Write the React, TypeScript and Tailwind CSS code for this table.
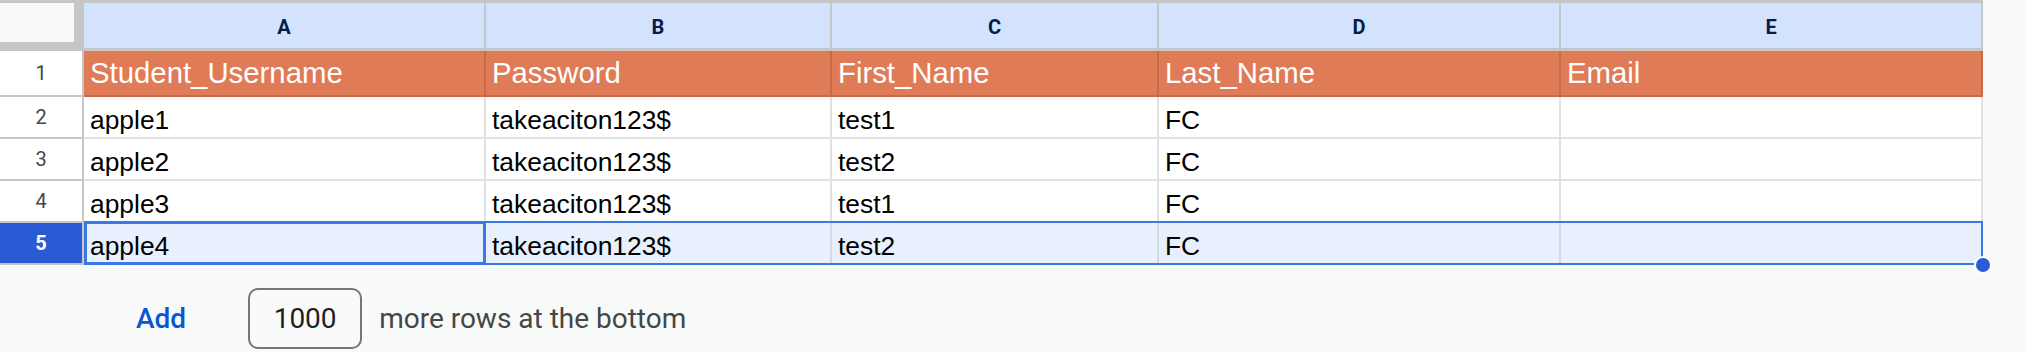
import React from "react";

type Row = {
  username: string;
  password: string;
  first: string;
  last: string;
  email: string;
};

const columns = [
  { key: "A", width: "w-[402px]" },
  { key: "B", width: "w-[346px]" },
  { key: "C", width: "w-[327px]" },
  { key: "D", width: "w-[402px]" },
  { key: "E", width: "w-[422px]" },
];

const headers = ["Student_Username", "Password", "First_Name", "Last_Name", "Email"];

const rows: Row[] = [
  { username: "apple1", password: "takeaciton123$", first: "test1", last: "FC", email: "" },
  { username: "apple2", password: "takeaciton123$", first: "test2", last: "FC", email: "" },
  { username: "apple3", password: "takeaciton123$", first: "test1", last: "FC", email: "" },
  { username: "apple4", password: "takeaciton123$", first: "test2", last: "FC", email: "" },
];

const cellFont = { fontFamily: '"Liberation Sans", Arial, sans-serif' };
const uiFont = { fontFamily: 'Roboto, "Noto Sans", sans-serif' };

function RowNumber({ n, active }: { n: number; active?: boolean }) {
  return (
    <div
      style={uiFont}
      className={
        active
          ? "w-[84px] h-full flex items-center justify-center border-r-2 border-b-2 border-[#c4c7c5] bg-[#2a5bd4] text-white font-bold text-[20px]"
          : "w-[84px] h-full flex items-center justify-center border-r-2 border-b-2 border-[#c4c7c5] bg-white text-[#444746] text-[20px]"
      }
    >
      {n}
    </div>
  );
}

function DataRow({ n, row, selected }: { n: number; row: Row; selected?: boolean }) {
  const values = [row.username, row.password, row.first, row.last, row.email];
  return (
    <div className="flex h-[42px]">
      <RowNumber n={n} active={selected} />
      <div className="relative flex h-full">
        {values.map((v, i) => (
          <div
            key={i}
            style={cellFont}
            className={
              selected
                ? `${columns[i].width} h-full flex items-end px-[6px] pb-[2px] border-r-2 border-b-2 border-[#d3d9e4] bg-[#e8effd] text-black text-[26.4px] leading-[30px] whitespace-nowrap overflow-hidden`
                : `${columns[i].width} h-full flex items-end px-[6px] pb-[2px] border-r-2 border-b-2 border-[#e1e1e1] bg-white text-black text-[26.4px] leading-[30px] whitespace-nowrap overflow-hidden`
            }
          >
            {v}
          </div>
        ))}
        {selected && (
          <>
            {/* selected range outline */}
            <div className="absolute -top-[2px] left-0 right-0 bottom-0 border-2 border-[#3b78e7] pointer-events-none" />
            {/* active cell outline */}
            <div className="absolute -top-[2px] left-0 w-[402px] bottom-0 border-[3px] border-[#3b78e7] pointer-events-none" />
            {/* fill handle */}
            <div className="absolute right-[-9px] bottom-[-9px] w-[18px] h-[18px] rounded-full bg-[#2a5bd4] border-2 border-white" />
          </>
        )}
      </div>
    </div>
  );
}

export default function App() {
  return (
    <div className="w-[2026px] h-[352px] bg-[#f8faf9] flex flex-col overflow-hidden">
      <div className="flex flex-col border-t-[3px] border-[#c4c7c5] w-[1983px]">
        {/* column letters */}
        <div className="flex h-[48px]">
          <div className="w-[84px] h-full flex flex-col">
            <div className="flex h-[39px]">
              <div className="w-[74px] bg-[#f8f9fa]" />
              <div className="flex-1 bg-[#c4c7c5]" />
            </div>
            <div className="flex-1 bg-[#c4c7c5]" />
          </div>
          {columns.map((c) => (
            <div
              key={c.key}
              style={uiFont}
              className={`${c.width} h-full flex items-center justify-center pt-[3px] bg-[#d3e3fd] border-r-2 border-b-[3px] border-[#c4c7c5] text-[#041e49] font-bold text-[20px]`}
            >
              {c.key}
            </div>
          ))}
        </div>

        {/* header row */}
        <div className="flex h-[46px]">
          <RowNumber n={1} />
          {headers.map((h, i) => (
            <div
              key={h}
              style={cellFont}
              className={`${columns[i].width} h-full flex items-end px-[6px] pb-[5px] bg-[#e07b58] border-r-2 border-b-2 border-[#c9694b] text-white text-[29.33px] leading-[34px] whitespace-nowrap`}
            >
              {h}
            </div>
          ))}
        </div>

        {rows.map((r, i) => (
          <DataRow key={i} n={i + 2} row={r} selected={i === 3} />
        ))}
      </div>

      {/* add rows footer */}
      <div style={uiFont} className="flex-1 flex items-center pl-[136px] pt-[20px]">
        <span className="text-[#0b57d0] font-medium text-[28px]">Add</span>
        <div className="ml-[62px] w-[114px] h-[61px] flex items-center justify-center rounded-[10px] border-2 border-[#747775] text-[#1f1f1f] text-[28px]">
          1000
        </div>
        <span className="ml-[17px] text-[#444746] text-[28px]">more rows at the bottom</span>
      </div>
    </div>
  );
}
